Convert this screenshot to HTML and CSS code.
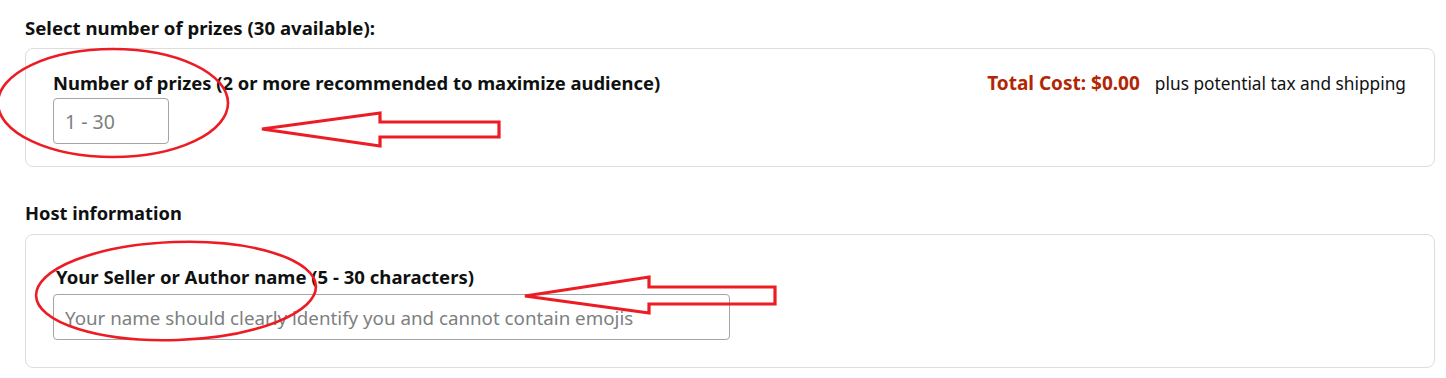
FILE: index.html
```html
<!DOCTYPE html>
<html lang="en">
<head>
<meta charset="utf-8">
<title>Giveaway setup</title>
<link rel="stylesheet" href="styles.css">
</head>
<body>
<main class="page">
  <section class="section section--prizes">
    <h2 class="section-title">Select number of prizes (30 available):</h2>
    <div class="card card--prizes">
      <div class="field">
        <label class="field-label" for="prizes">Number of prizes (2 or more recommended to maximize audience)</label>
        <input class="text-input text-input--small" id="prizes" type="text" placeholder="1 - 30">
      </div>
      <div class="cost">
        <span class="cost-total">Total Cost: $0.00</span>
        <span class="cost-note">plus potential tax and shipping</span>
      </div>
    </div>
  </section>

  <section class="section section--host">
    <h2 class="section-title">Host information</h2>
    <div class="card card--host">
      <div class="field">
        <label class="field-label field-label--host" for="hostname">Your Seller or Author name (5 - 30 characters)</label>
        <input class="text-input text-input--wide" id="hostname" type="text" placeholder="Your name should clearly identify you and cannot contain emojis">
      </div>
    </div>
  </section>

  <svg class="annotations" width="1446" height="378" viewBox="0 0 1446 378" aria-hidden="true">
    <ellipse cx="113" cy="103" rx="115" ry="54" />
    <polygon points="262,129 380,113 380,122 499,122 499,137 380,137 380,146" />
    <ellipse cx="176" cy="291" rx="140" ry="49" transform="rotate(-2 176 291)" />
    <polygon points="525,296 649,277 649,287 775,287 775,304 649,304 649,313" />
  </svg>
</main>
</body>
</html>
```
FILE: styles.css
```css
html, body {
  margin: 0;
  padding: 0;
  background: #ffffff;
}

body {
  font-family: "Noto Sans", "Open Sans", sans-serif;
  color: #0f1111;
}

.page {
  position: relative;
  width: 1446px;
  height: 378px;
  padding: 16px 11px 0 25px;
  box-sizing: border-box;
  overflow: hidden;
}

.section-title {
  margin: 0;
  font-size: 18.6px;
  line-height: 24px;
  font-weight: 700;
}

.section--prizes .section-title {
  margin-bottom: -1px;
}

.section--host {
  margin-top: 34px;
}

.section--host .section-title {
  font-size: 18.3px;
}

.card {
  margin-top: 9px;
  border: 1px solid #dcdede;
  border-radius: 8px;
  background: #ffffff;
  box-sizing: border-box;
}

.card--prizes {
  display: flex;
  justify-content: space-between;
  align-items: flex-start;
  padding: 22px 28px 22px 27px;
}

.card--host {
  padding: 30px 28px 27px 27px;
}

.field {
  display: flex;
  flex-direction: column;
  align-items: flex-start;
}

.field-label {
  font-size: 18.4px;
  line-height: 24px;
  font-weight: 700;
}

.field-label--host {
  font-size: 18.55px;
  padding-left: 3px;
}

.text-input {
  height: 46px;
  box-sizing: border-box;
  border: 1px solid #a2a6a6;
  border-radius: 4px;
  padding: 0 11px;
  font-family: "Noto Sans", "Open Sans", sans-serif;
  color: #0f1111;
  background: #ffffff;
  outline: none;
}

.text-input::placeholder {
  color: #7c8080;
  opacity: 1;
}

.text-input--small {
  margin-top: 3px;
  width: 116px;
  font-size: 19.5px;
}

.text-input--wide {
  margin-top: 5px;
  width: 677px;
  font-size: 18.75px;
}

.cost {
  display: flex;
  align-items: baseline;
  gap: 15px;
  line-height: 24px;
}

.cost-total {
  color: #b12704;
  font-size: 19px;
  font-weight: 700;
}

.cost-note {
  font-size: 17.3px;
}

.annotations {
  position: absolute;
  top: 0;
  left: 0;
  pointer-events: none;
  fill: none;
  stroke: #ed1c24;
}

.annotations ellipse {
  stroke-width: 2.6;
}

.annotations polygon {
  stroke-width: 3.2;
  stroke-linejoin: miter;
}
```
